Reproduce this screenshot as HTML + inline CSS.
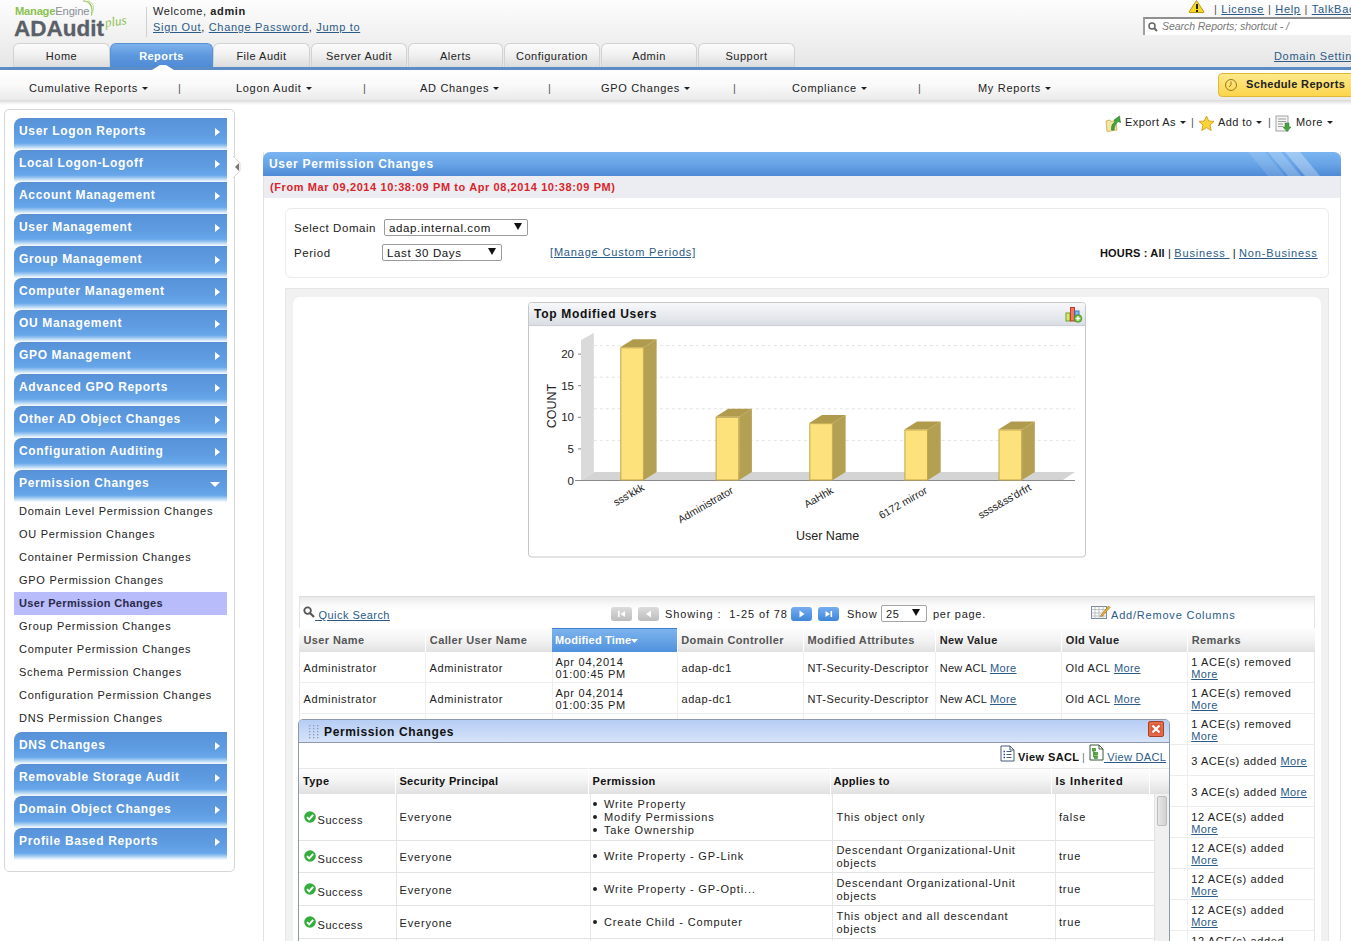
<!DOCTYPE html>
<html><head><meta charset="utf-8">
<style>
*{box-sizing:border-box;margin:0;padding:0}
html,body{width:1351px;height:941px;overflow:hidden;background:#fff;font-family:"Liberation Sans",sans-serif;font-size:11px;color:#222}
.a{position:absolute;white-space:nowrap}
.lnk{color:#2b5b86;text-decoration:underline}
#hdr{position:absolute;left:0;top:0;width:1351px;height:67px;background:linear-gradient(#fdfdfd 0%,#f3f3f3 45%,#e6e6e6 100%)}
.tab{position:absolute;top:43px;height:24px;border:1px solid #d2d2d2;border-bottom:none;border-radius:6px 6px 0 0;background:linear-gradient(#fbfbfb 0%,#f1f1f1 45%,#dcdcdc 100%);text-align:center;line-height:24px;color:#222;letter-spacing:.5px}
.tab.on{background:linear-gradient(#7eb2ec 0%,#5d98de 50%,#4f8ad6 100%);border-color:#5a90d4;color:#fff;font-weight:bold;letter-spacing:.45px}
#bl{position:absolute;left:0;top:67px;width:1351px;height:3px;background:#5b8cc6}
#sub{position:absolute;left:0;top:70px;width:1351px;height:31px;background:linear-gradient(#fff 0%,#f9f9f9 50%,#e9e9e9 100%)}
#subsh{position:absolute;left:0;top:100px;width:1351px;height:5px;background:linear-gradient(#d9d9d9,#fff)}
.sn{position:absolute;top:82px;letter-spacing:.68px;color:#222}
.car{display:inline-block;width:0;height:0;border-left:3px solid transparent;border-right:3px solid transparent;border-top:3px solid #222;vertical-align:middle;margin-left:4px;margin-top:-2px}
.sep{position:absolute;top:82px;color:#555}
#side{position:absolute;left:4px;top:109px;width:231px;height:763px;border:1px solid #d6d6d6;border-radius:5px;background:#fff}
.mb{position:absolute;left:14px;width:213px;height:32px;border-radius:8px 0 0 0;border-top:1px solid #5a8ed0;background:linear-gradient(#5893da 0%,#5e9be0 45%,#67a7ea 78%,#9ac6f0 86%,#e9f3fc 97%,#f4f9fe 100%);color:#fff;font-weight:bold;font-size:12px;letter-spacing:.65px;padding-left:5px;line-height:25px}
.mb i{position:absolute;right:7px;top:9px;width:0;height:0;border-top:4.5px solid transparent;border-bottom:4.5px solid transparent;border-left:5px solid #fff}
.mb i.dn{border-left:5px solid transparent;border-right:5px solid transparent;border-top:5px solid #fff;border-bottom:none;right:7px;top:11px}
.si{position:absolute;left:14px;width:213px;height:23px;padding-left:5px;line-height:23px;color:#222;letter-spacing:.72px}
.si.on{background:#b8bcfb;font-weight:bold;color:#2a2a48;letter-spacing:.33px}
</style></head><body>
<div id="hdr"></div>
<!-- logo -->
<div class="a" style="left:15px;top:5px;font-size:11.2px;font-weight:bold;color:#8cc152;letter-spacing:-.25px">Manage<span style="font-weight:normal;color:#8a8f94;letter-spacing:-.1px">Engine</span></div>
<svg class="a" style="left:80px;top:0px" width="20" height="18" viewBox="0 0 20 18"><path d="M3 0.8 Q14 1.5 11.5 15.5" stroke="#9ccc65" stroke-width="1.3" fill="none"/><path d="M8 0.5 Q16 4 12.5 13" stroke="#c0dd98" stroke-width="1" fill="none"/></svg>
<div class="a" style="left:14px;top:16px;font-size:22.5px;font-weight:bold;color:#5a6068;letter-spacing:0px;-webkit-text-stroke:.3px #5a6068">ADAudit</div>
<div class="a" style="left:106px;top:15px;font-size:13px;font-style:italic;color:#8cc152;font-family:'Liberation Serif',serif;transform:rotate(-8deg);transform-origin:left bottom">plus</div>
<div class="a" style="left:146px;top:7px;width:1px;height:30px;background:#d0d0d0"></div>
<div class="a" style="left:153px;top:5px;letter-spacing:.62px;color:#222">Welcome, <b>admin</b></div>
<div class="a" style="left:153px;top:21px;letter-spacing:.68px;color:#222"><span class="lnk">Sign Out</span>, <span class="lnk">Change Password</span>, <span class="lnk">Jump to</span></div>

<!-- top right -->
<svg class="a" style="left:1188px;top:0px" width="17" height="13" viewBox="0 0 17 13"><path d="M8.5 0.5 L16 12 Q16 12.5 15.5 12.5 L1.5 12.5 Q1 12.5 1 12 Z" fill="#f7d62a" stroke="#b89a10" stroke-width="1" stroke-linejoin="round"/><rect x="8" y="4" width="2" height="5" fill="#222"/><rect x="8" y="10" width="2" height="2" fill="#222"/></svg>
<div class="a" style="left:1214px;top:3px;letter-spacing:.7px;color:#555">|&nbsp;<span class="lnk">License</span>&nbsp;|&nbsp;<span class="lnk">Help</span>&nbsp;|&nbsp;<span class="lnk">TalkBack</span></div>
<div class="a" style="left:1143px;top:17px;width:220px;height:18px;border-top:2px solid #8f8f8f;border-left:2px solid #a0a0a0;background:#fff"></div>
<svg class="a" style="left:1148px;top:22px" width="10" height="10" viewBox="0 0 10 10"><circle cx="4" cy="4" r="3" stroke="#666" stroke-width="1.5" fill="none"/><path d="M6 6 L9 9" stroke="#666" stroke-width="2"/></svg>
<div class="a" style="left:1162px;top:20px;font-style:italic;color:#777;font-size:10.5px;letter-spacing:-.05px">Search Reports; shortcut - /</div>
<div class="a lnk" style="left:1274px;top:50px;letter-spacing:.68px">Domain Settings</div>

<!-- tabs -->
<div class="tab" style="left:13px;width:97px">Home</div>
<div class="tab on" style="left:110px;width:103px">Reports</div>
<div class="tab" style="left:213px;width:97px">File Audit</div>
<div class="tab" style="left:311px;width:96px">Server Audit</div>
<div class="tab" style="left:408px;width:95px">Alerts</div>
<div class="tab" style="left:504px;width:96px">Configuration</div>
<div class="tab" style="left:601px;width:96px">Admin</div>
<div class="tab" style="left:698px;width:97px">Support</div>
<div id="bl"></div>
<svg class="a" style="left:152px;top:64px" width="22" height="6" viewBox="0 0 22 6"><path d="M0 6 L8 1 L14 1 L22 6 Z" fill="#fff"/></svg>

<!-- subnav -->
<div id="sub"></div>
<div id="subsh"></div>
<div class="sn" style="left:29px">Cumulative Reports<span class="car"></span></div>
<div class="sep" style="left:178px">|</div>
<div class="sn" style="left:236px">Logon Audit<span class="car"></span></div>
<div class="sep" style="left:363px">|</div>
<div class="sn" style="left:420px">AD Changes<span class="car"></span></div>
<div class="sep" style="left:548px">|</div>
<div class="sn" style="left:601px">GPO Changes<span class="car"></span></div>
<div class="sep" style="left:733px">|</div>
<div class="sn" style="left:792px">Compliance<span class="car"></span></div>
<div class="sep" style="left:918px">|</div>
<div class="sn" style="left:978px">My Reports<span class="car"></span></div>
<div class="a" style="left:1218px;top:73px;width:140px;height:24px;border:1px solid #e0b93a;border-radius:4px;background:linear-gradient(#ffe98a,#fcd54c)"></div>
<svg class="a" style="left:1224px;top:78px" width="14" height="14" viewBox="0 0 14 14"><circle cx="7" cy="7" r="5.5" stroke="#9a7a20" stroke-width="1" fill="none"/><path d="M7 3.5 V7 L5 9" stroke="#9a7a20" stroke-width="1" fill="none"/></svg>
<div class="a" style="left:1246px;top:78px;font-weight:bold;letter-spacing:.35px;color:#222">Schedule Reports</div>

<!-- sidebar -->
<div id="side"></div>
<div class="mb" style="top:118px">User Logon Reports<i></i></div>
<div class="mb" style="top:150px">Local Logon-Logoff<i></i></div>
<div class="mb" style="top:182px">Account Management<i></i></div>
<div class="mb" style="top:214px">User Management<i></i></div>
<div class="mb" style="top:246px">Group Management<i></i></div>
<div class="mb" style="top:278px">Computer Management<i></i></div>
<div class="mb" style="top:310px">OU Management<i></i></div>
<div class="mb" style="top:342px">GPO Management<i></i></div>
<div class="mb" style="top:374px">Advanced GPO Reports<i></i></div>
<div class="mb" style="top:406px">Other AD Object Changes<i></i></div>
<div class="mb" style="top:438px">Configuration Auditing<i></i></div>
<div class="mb" style="top:470px">Permission Changes<i class="dn"></i></div>
<div class="si" style="top:500px">Domain Level Permission Changes</div>
<div class="si" style="top:523px">OU Permission Changes</div>
<div class="si" style="top:546px">Container Permission Changes</div>
<div class="si" style="top:569px">GPO Permission Changes</div>
<div class="si on" style="top:592px">User Permission Changes</div>
<div class="si" style="top:615px">Group Permission Changes</div>
<div class="si" style="top:638px">Computer Permission Changes</div>
<div class="si" style="top:661px">Schema Permission Changes</div>
<div class="si" style="top:684px">Configuration Permission Changes</div>
<div class="si" style="top:707px">DNS Permission Changes</div>
<div class="mb" style="top:732px">DNS Changes<i></i></div>
<div class="mb" style="top:764px">Removable Storage Audit<i></i></div>
<div class="mb" style="top:796px">Domain Object Changes<i></i></div>
<div class="mb" style="top:828px">Profile Based Reports<i></i></div>
<svg class="a" style="left:233px;top:156px" width="8" height="22" viewBox="0 0 8 22"><path d="M0 0 L7 7 L7 15 L0 22" fill="#fff" stroke="#d6d6d6"/><path d="M2 11 L6 7 L6 15 Z" fill="#777"/></svg>


<!-- toolbar export -->
<svg class="a" style="left:1105px;top:115px" width="17" height="17" viewBox="0 0 17 17"><path d="M1 6 L5 5 L6 6.5 L11 5.5 L12 15 L2 16.5 Z" fill="#f4e6a0" stroke="#c8aa50" stroke-width="0.8"/><path d="M6.5 15 Q6 9 10 7 L9 5 L14.5 1 L15.5 7.5 L13 6.5 Q9.5 9 9 15 Z" fill="#3da63a" stroke="#2a7a25" stroke-width="0.6"/></svg>
<div class="a" style="left:1125px;top:116px;letter-spacing:.43px">Export As<span class="car"></span></div>
<div class="a" style="left:1191px;top:116px;color:#555">|</div>
<svg class="a" style="left:1198px;top:115px" width="17" height="17" viewBox="0 0 17 17"><path d="M8.5 1 L10.7 6 L16 6.4 L12 10 L13.2 15.5 L8.5 12.6 L3.8 15.5 L5 10 L1 6.4 L6.3 6 Z" fill="#fbd537" stroke="#d39a17" stroke-width="0.9"/></svg>
<div class="a" style="left:1218px;top:116px;letter-spacing:.43px">Add to<span class="car"></span></div>
<div class="a" style="left:1268px;top:116px;color:#555">|</div>
<svg class="a" style="left:1275px;top:115px" width="17" height="17" viewBox="0 0 17 17"><rect x="1" y="1" width="12" height="15" fill="#f4f4f4" stroke="#9a9a9a" stroke-width="0.9"/><path d="M3 4 H11 M3 6.5 H11 M3 9 H8 M3 11.5 H8" stroke="#888" stroke-width="0.8"/><path d="M10 8 H14 V12 H16 L12 16.5 L8 12 H10 Z" fill="#47a23f" stroke="#2e7d2a" stroke-width="0.5"/></svg>
<div class="a" style="left:1296px;top:116px;letter-spacing:.43px">More<span class="car"></span></div>

<!-- report panel -->
<div class="a" style="left:263px;top:152px;width:1078px;height:800px;border-left:1px solid #e2e2e2;border-right:1px solid #e2e2e2;background:#fff"></div>
<div class="a" style="left:263px;top:152px;width:1078px;height:24px;border-radius:7px 7px 0 0;background:linear-gradient(#7ab4f0 0%,#6aa6e8 45%,#4f8bd6 100%);overflow:hidden">
 <svg style="position:absolute;left:985px;top:0" width="93" height="24" viewBox="0 0 93 24"><path d="M0 0 H17 L37 24 H20 Z" fill="#fff" fill-opacity=".13"/><path d="M20 0 H33 L53 24 H40 Z" fill="#fff" fill-opacity=".22"/><path d="M37 0 H52 L72 24 H57 Z" fill="#fff" fill-opacity=".3"/></svg>
</div>
<div class="a" style="left:269px;top:157px;font-size:12px;font-weight:bold;color:#fff;letter-spacing:.7px">User Permission Changes</div>
<div class="a" style="left:264px;top:176px;width:1076px;height:22px;background:#ecedf2"></div>
<div class="a" style="left:270px;top:181px;font-weight:bold;color:#d9252a;letter-spacing:.6px">(From Mar 09,2014 10:38:09 PM to Apr 08,2014 10:38:09 PM)</div>

<!-- filter box -->
<div class="a" style="left:285px;top:208px;width:1044px;height:70px;border:1px solid #ebebeb;border-radius:6px;background:#fff"></div>
<div class="a" style="left:294px;top:222px;font-size:11.5px;color:#222;letter-spacing:.56px">Select Domain</div>
<div class="a" style="left:384px;top:219px;width:144px;height:17px;border:1px solid #9a9a9a;border-radius:2px;background:#fff"></div>
<div class="a" style="left:389px;top:222px;font-size:11.5px;color:#111;letter-spacing:.62px">adap.internal.com</div>
<svg class="a" style="left:514px;top:223px" width="8" height="7"><path d="M0 0 H8 L4 7 Z" fill="#111"/></svg>
<div class="a" style="left:294px;top:247px;font-size:11.5px;color:#222;letter-spacing:.56px">Period</div>
<div class="a" style="left:382px;top:244px;width:120px;height:17px;border:1px solid #9a9a9a;border-radius:2px;background:#fff"></div>
<div class="a" style="left:387px;top:247px;font-size:11.5px;color:#111;letter-spacing:.62px">Last 30 Days</div>
<svg class="a" style="left:488px;top:248px" width="8" height="7"><path d="M0 0 H8 L4 7 Z" fill="#111"/></svg>
<div class="a lnk" style="left:550px;top:246px;letter-spacing:.82px">[Manage Custom Periods]</div>
<div class="a" style="left:1100px;top:247px;font-weight:bold;color:#111;letter-spacing:.15px">HOURS : All <span style="font-weight:normal">|</span> <span class="lnk" style="font-weight:normal;letter-spacing:.85px">Business </span><span style="font-weight:normal">&nbsp;|&nbsp;</span><span class="lnk" style="font-weight:normal;letter-spacing:.85px">Non-Business </span></div>

<!-- chart outer -->
<div class="a" style="left:285px;top:288px;width:1044px;height:700px;background:#f1f1f1;border:1px solid #e6e6e6"></div>
<div class="a" style="left:293px;top:297px;width:1028px;height:700px;background:#fff;border-radius:7px 7px 0 0"></div>

<!-- CHART -->
<svg class="a" style="left:528px;top:302px" width="559" height="256" viewBox="0 0 559 256" font-family="Liberation Sans, sans-serif">
<defs><linearGradient id="chh" x1="0" y1="0" x2="0" y2="1"><stop offset="0" stop-color="#f7f8fa"/><stop offset="1" stop-color="#d9dde3"/></linearGradient></defs>
<rect x="0.5" y="0.5" width="557" height="254.5" rx="3" fill="#fff" stroke="#c6c6c6"/>
<path d="M1 4 Q1 1 4 1 H554 Q557 1 557 4 V24 H1 Z" fill="url(#chh)"/>
<line x1="1" y1="23.6" x2="557" y2="23.6" stroke="#c9cdd3"/>
<path d="M53.0 178.0 L53.0 38 L65.8 31 L65.8 170.0 Z" fill="#dadada"/>
<path d="M53.0 178.0 L65.8 170.0 L547 170.0 L535 178.0 Z" fill="#d4d4d4"/>
<line x1="65.8" y1="138.4" x2="547" y2="138.4" stroke="#e3e3e3" stroke-dasharray="3,3"/>
<line x1="65.8" y1="106.8" x2="547" y2="106.8" stroke="#e3e3e3" stroke-dasharray="3,3"/>
<line x1="65.8" y1="75.2" x2="547" y2="75.2" stroke="#e3e3e3" stroke-dasharray="3,3"/>
<line x1="65.8" y1="43.6" x2="547" y2="43.6" stroke="#e3e3e3" stroke-dasharray="3,3"/>
<line x1="47" y1="178.5" x2="547" y2="178.5" stroke="#8a8a8a"/>
<line x1="50" y1="178.5" x2="53" y2="178.5" stroke="#888"/>
<text x="46" y="182.5" font-size="11.5" text-anchor="end" fill="#222">0</text>
<line x1="50" y1="146.9" x2="53" y2="146.9" stroke="#888"/>
<text x="46" y="150.9" font-size="11.5" text-anchor="end" fill="#222">5</text>
<line x1="50" y1="115.3" x2="53" y2="115.3" stroke="#888"/>
<text x="46" y="119.3" font-size="11.5" text-anchor="end" fill="#222">10</text>
<line x1="50" y1="83.7" x2="53" y2="83.7" stroke="#888"/>
<text x="46" y="87.7" font-size="11.5" text-anchor="end" fill="#222">15</text>
<line x1="50" y1="52.1" x2="53" y2="52.1" stroke="#888"/>
<text x="46" y="56.1" font-size="11.5" text-anchor="end" fill="#222">20</text>
<path d="M115.9 178.0 L128.6 170.0 L128.6 37.28 L115.9 45.28 Z" fill="#b3a052"/>
<path d="M92.3 45.28 L105.0 37.28 L128.6 37.28 L115.9 45.28 Z" fill="#b09a4c"/>
<rect x="92.8" y="45.78" width="22.6" height="132.22000000000003" fill="#fde17a" stroke="#c4a748" stroke-width="1"/>
<path d="M211.2 178.0 L223.9 170.0 L223.9 106.8 L211.2 114.8 Z" fill="#b3a052"/>
<path d="M187.6 114.8 L200.3 106.8 L223.9 106.8 L211.2 114.8 Z" fill="#b09a4c"/>
<rect x="188.1" y="115.3" width="22.6" height="62.69999999999999" fill="#fde17a" stroke="#c4a748" stroke-width="1"/>
<path d="M304.9 178.0 L317.6 170.0 L317.6 113.12 L304.9 121.12 Z" fill="#b3a052"/>
<path d="M281.3 121.12 L294.0 113.12 L317.6 113.12 L304.9 121.12 Z" fill="#b09a4c"/>
<rect x="281.8" y="121.62" width="22.6" height="56.379999999999995" fill="#fde17a" stroke="#c4a748" stroke-width="1"/>
<path d="M400.0 178.0 L412.7 170.0 L412.7 119.44 L400.0 127.44 Z" fill="#b3a052"/>
<path d="M376.4 127.44 L389.1 119.44 L412.7 119.44 L400.0 127.44 Z" fill="#b09a4c"/>
<rect x="376.9" y="127.94" width="22.6" height="50.06" fill="#fde17a" stroke="#c4a748" stroke-width="1"/>
<path d="M494.1 178.0 L506.8 170.0 L506.8 119.44 L494.1 127.44 Z" fill="#b3a052"/>
<path d="M470.5 127.44 L483.2 119.44 L506.8 119.44 L494.1 127.44 Z" fill="#b09a4c"/>
<rect x="471.0" y="127.94" width="22.6" height="50.06" fill="#fde17a" stroke="#c4a748" stroke-width="1"/>
<text x="117.0" y="187.5" font-size="10.5" text-anchor="end" fill="#222" transform="rotate(-30 117.0 187.5)">sss'kkk</text>
<text x="206.0" y="190.5" font-size="10.5" text-anchor="end" fill="#222" transform="rotate(-30 206.0 190.5)">Administrator</text>
<text x="306.0" y="190.5" font-size="10.5" text-anchor="end" fill="#222" transform="rotate(-30 306.0 190.5)">AaHhk</text>
<text x="400.0" y="190.5" font-size="10.5" text-anchor="end" fill="#222" transform="rotate(-30 400.0 190.5)">6172 mirror</text>
<text x="504.0" y="187.5" font-size="10.5" text-anchor="end" fill="#222" transform="rotate(-30 504.0 187.5)">ssss&amp;ss'drfrt</text>
<text x="27.5" y="104" font-size="12.5" text-anchor="middle" fill="#222" transform="rotate(-90 27.5 104)">COUNT</text>
<text x="268" y="238" font-size="12.5" fill="#222">User Name</text>
<text x="6" y="16" font-size="12" font-weight="bold" fill="#111" letter-spacing="0.7">Top Modified Users</text>
<g transform="translate(537,4)"><rect x="1" y="7" width="4" height="8" fill="#d8e86a" stroke="#6fa030" stroke-width="1"/><rect x="5.5" y="1.5" width="4" height="13.5" fill="#f07a60" stroke="#c0392b" stroke-width="1"/><rect x="10" y="5" width="4" height="10" fill="#7ec0ee" stroke="#3a80c0" stroke-width="1"/><circle cx="13" cy="12.5" r="3.8" fill="#7cc242" stroke="#3d8a20" stroke-width=".8"/><path d="M10.8 12.5 H15.2 M13 10.3 V14.7" stroke="#fff" stroke-width="1.4"/></g>
</svg>
<!-- TABLE -->
<div class="a" style="left:299px;top:596px;width:1016px;height:32px;border-top:1px solid #dcdcdc;border-left:1px solid #e4e4e4;border-right:1px solid #e4e4e4;background:linear-gradient(#e9e9e9 0px,#fafafa 8px,#fff 14px)"></div>
<svg class="a" style="left:303px;top:606px" width="12" height="12" viewBox="0 0 12 12"><circle cx="4.6" cy="4.6" r="3.3" stroke="#555" stroke-width="1.8" fill="none"/><path d="M7 7 L11 11" stroke="#555" stroke-width="2.2"/></svg>
<div class="a lnk" style="left:315px;top:609px;letter-spacing:.45px">&nbsp;Quick Search</div>
<div class="a" style="left:611px;top:607px;width:21px;height:14px;border-radius:3px;background:linear-gradient(#dcdcdc,#bdbdbd)"></div><svg class="a" style="left:611px;top:607px" width="21" height="14"><rect x="7" y="4" width="1.6" height="6" fill="#fff"/><path d="M14 4 L9.5 7 L14 10 Z" fill="#fff"/></svg>
<div class="a" style="left:638px;top:607px;width:21px;height:14px;border-radius:3px;background:linear-gradient(#dcdcdc,#bdbdbd)"></div><svg class="a" style="left:638px;top:607px" width="21" height="14"><path d="M13 3.5 L8 7 L13 10.5 Z" fill="#fff"/></svg>
<div class="a" style="left:665px;top:608px;letter-spacing:.9px">Showing :&nbsp; 1-25 of 78</div>
<div class="a" style="left:791px;top:607px;width:21px;height:14px;border-radius:3px;background:linear-gradient(#76aef0,#3f86d8)"></div><svg class="a" style="left:791px;top:607px" width="21" height="14"><path d="M8.5 3.5 L13.5 7 L8.5 10.5 Z" fill="#fff"/></svg>
<div class="a" style="left:818px;top:607px;width:21px;height:14px;border-radius:3px;background:linear-gradient(#76aef0,#3f86d8)"></div><svg class="a" style="left:818px;top:607px" width="21" height="14"><path d="M7.5 4 L12 7 L7.5 10 Z" fill="#fff"/><rect x="12.5" y="4" width="1.6" height="6" fill="#fff"/></svg>
<div class="a" style="left:847px;top:608px;letter-spacing:.7px">Show</div>
<div class="a" style="left:881px;top:605px;width:46px;height:17px;border:1px solid #a5a5a5;border-radius:2px;background:#fff"></div>
<div class="a" style="left:886px;top:608px;letter-spacing:.7px">25</div>
<svg class="a" style="left:912px;top:609px" width="8" height="7"><path d="M0 0 H8 L4 7 Z" fill="#111"/></svg>
<div class="a" style="left:933px;top:608px;letter-spacing:.72px">per page.</div>
<svg class="a" style="left:1091px;top:604px" width="20" height="15" viewBox="0 0 20 15"><rect x="0.5" y="2.5" width="15" height="12" fill="#fff" stroke="#7a8a9a"/><path d="M0.5 5.5 H15.5 M4 2.5 V14.5 M8 2.5 V14.5 M12 2.5 V14.5 M0.5 9 H15.5 M0.5 12 H15.5" stroke="#a9b4c0" stroke-width=".8"/><path d="M10 11 L17.5 2 L19 3.5 L11.5 12 L9.5 12.8 Z" fill="#f0b030" stroke="#9a6a10" stroke-width=".6"/></svg>
<div class="a" style="left:1111px;top:609px;color:#2b5b86;letter-spacing:.8px">Add/Remove Columns</div>
<div class="a" style="left:299px;top:628px;width:1016px;height:24px;background:linear-gradient(#fdfdfd 0%,#f3f3f3 50%,#e1e1e1 100%)"></div>
<div class="a" style="left:303.4px;top:634px;font-weight:bold;color:#555;letter-spacing:.4px">User Name</div>
<div class="a" style="left:425px;top:628px;width:1px;height:24px;background:#fff"></div>
<div class="a" style="left:429.8px;top:634px;font-weight:bold;color:#555;letter-spacing:.4px">Caller User Name</div>
<div class="a" style="left:552px;top:628px;width:1px;height:24px;background:#fff"></div>
<div class="a" style="left:552px;top:628px;width:125px;height:24px;border-top:1px solid #3d7fd0;background:linear-gradient(#7db3ee,#5092dd)"></div>
<div class="a" style="left:555px;top:634px;font-weight:bold;color:#fff;letter-spacing:.2px">Modified Time<svg width="7" height="5" style="vertical-align:middle;margin-left:0px"><path d="M0 0 H7 L3.5 4 Z" fill="#fff"/></svg></div>
<div class="a" style="left:677px;top:628px;width:1px;height:24px;background:#fff"></div>
<div class="a" style="left:681.2px;top:634px;font-weight:bold;color:#555;letter-spacing:.4px">Domain Controller</div>
<div class="a" style="left:803px;top:628px;width:1px;height:24px;background:#fff"></div>
<div class="a" style="left:807.4px;top:634px;font-weight:bold;color:#555;letter-spacing:.4px">Modified Attributes</div>
<div class="a" style="left:935px;top:628px;width:1px;height:24px;background:#fff"></div>
<div class="a" style="left:939.7px;top:634px;font-weight:bold;color:#222;letter-spacing:.4px">New Value</div>
<div class="a" style="left:1061px;top:628px;width:1px;height:24px;background:#fff"></div>
<div class="a" style="left:1065.7px;top:634px;font-weight:bold;color:#222;letter-spacing:.4px">Old Value</div>
<div class="a" style="left:1187px;top:628px;width:1px;height:24px;background:#fff"></div>
<div class="a" style="left:1191.7px;top:634px;font-weight:bold;color:#555;letter-spacing:.4px">Remarks</div>
<div class="a" style="left:299px;top:652px;width:1016px;height:31px;border-bottom:1px solid #ededed;border-left:1px solid #e6e6e6;border-right:1px solid #e6e6e6"></div>
<div class="a" style="left:425px;top:652px;width:1px;height:31px;background:#efefef"></div>
<div class="a" style="left:552px;top:652px;width:1px;height:31px;background:#efefef"></div>
<div class="a" style="left:677px;top:652px;width:1px;height:31px;background:#efefef"></div>
<div class="a" style="left:803px;top:652px;width:1px;height:31px;background:#efefef"></div>
<div class="a" style="left:935px;top:652px;width:1px;height:31px;background:#efefef"></div>
<div class="a" style="left:1061px;top:652px;width:1px;height:31px;background:#efefef"></div>
<div class="a" style="left:1187px;top:652px;width:1px;height:31px;background:#efefef"></div>
<div class="a" style="left:303.4px;top:662px;letter-spacing:.68px">Administrator</div>
<div class="a" style="left:429.4px;top:662px;letter-spacing:.68px">Administrator</div>
<div class="a" style="left:555.4px;top:656px;letter-spacing:.75px;line-height:12px">Apr 04,2014<br>01:00:45 PM</div>
<div class="a" style="left:681.5px;top:662px;letter-spacing:.56px">adap-dc1</div>
<div class="a" style="left:807.4px;top:662px;letter-spacing:.46px">NT-Security-Descriptor</div>
<div class="a" style="left:939.8px;top:662px;letter-spacing:.2px">New ACL <span class="lnk" style="letter-spacing:.4px">More</span></div>
<div class="a" style="left:1065.5px;top:662px;letter-spacing:.6px">Old ACL <span class="lnk" style="letter-spacing:.4px">More</span></div>
<div class="a" style="left:1191.2px;top:656px;letter-spacing:.66px;line-height:12px">1 ACE(s) removed<br><span class="lnk" style="letter-spacing:.4px">More</span></div>
<div class="a" style="left:299px;top:683px;width:1016px;height:31px;border-bottom:1px solid #ededed;border-left:1px solid #e6e6e6;border-right:1px solid #e6e6e6"></div>
<div class="a" style="left:425px;top:683px;width:1px;height:31px;background:#efefef"></div>
<div class="a" style="left:552px;top:683px;width:1px;height:31px;background:#efefef"></div>
<div class="a" style="left:677px;top:683px;width:1px;height:31px;background:#efefef"></div>
<div class="a" style="left:803px;top:683px;width:1px;height:31px;background:#efefef"></div>
<div class="a" style="left:935px;top:683px;width:1px;height:31px;background:#efefef"></div>
<div class="a" style="left:1061px;top:683px;width:1px;height:31px;background:#efefef"></div>
<div class="a" style="left:1187px;top:683px;width:1px;height:31px;background:#efefef"></div>
<div class="a" style="left:303.4px;top:693px;letter-spacing:.68px">Administrator</div>
<div class="a" style="left:429.4px;top:693px;letter-spacing:.68px">Administrator</div>
<div class="a" style="left:555.4px;top:687px;letter-spacing:.75px;line-height:12px">Apr 04,2014<br>01:00:35 PM</div>
<div class="a" style="left:681.5px;top:693px;letter-spacing:.56px">adap-dc1</div>
<div class="a" style="left:807.4px;top:693px;letter-spacing:.46px">NT-Security-Descriptor</div>
<div class="a" style="left:939.8px;top:693px;letter-spacing:.2px">New ACL <span class="lnk" style="letter-spacing:.4px">More</span></div>
<div class="a" style="left:1065.5px;top:693px;letter-spacing:.6px">Old ACL <span class="lnk" style="letter-spacing:.4px">More</span></div>
<div class="a" style="left:1191.2px;top:687px;letter-spacing:.66px;line-height:12px">1 ACE(s) removed<br><span class="lnk" style="letter-spacing:.4px">More</span></div>
<div class="a" style="left:299px;top:714px;width:1016px;height:31px;border-bottom:1px solid #ededed;border-left:1px solid #e6e6e6;border-right:1px solid #e6e6e6"></div>
<div class="a" style="left:425px;top:714px;width:1px;height:31px;background:#efefef"></div>
<div class="a" style="left:552px;top:714px;width:1px;height:31px;background:#efefef"></div>
<div class="a" style="left:677px;top:714px;width:1px;height:31px;background:#efefef"></div>
<div class="a" style="left:803px;top:714px;width:1px;height:31px;background:#efefef"></div>
<div class="a" style="left:935px;top:714px;width:1px;height:31px;background:#efefef"></div>
<div class="a" style="left:1061px;top:714px;width:1px;height:31px;background:#efefef"></div>
<div class="a" style="left:1187px;top:714px;width:1px;height:31px;background:#efefef"></div>
<div class="a" style="left:303.4px;top:724px;letter-spacing:.68px">Administrator</div>
<div class="a" style="left:429.4px;top:724px;letter-spacing:.68px">Administrator</div>
<div class="a" style="left:555.4px;top:718px;letter-spacing:.75px;line-height:12px">Apr 04,2014<br>01:00:25 PM</div>
<div class="a" style="left:681.5px;top:724px;letter-spacing:.56px">adap-dc1</div>
<div class="a" style="left:807.4px;top:724px;letter-spacing:.46px">NT-Security-Descriptor</div>
<div class="a" style="left:939.8px;top:724px;letter-spacing:.2px">New ACL <span class="lnk" style="letter-spacing:.4px">More</span></div>
<div class="a" style="left:1065.5px;top:724px;letter-spacing:.6px">Old ACL <span class="lnk" style="letter-spacing:.4px">More</span></div>
<div class="a" style="left:1191.2px;top:718px;letter-spacing:.66px;line-height:12px">1 ACE(s) removed<br><span class="lnk" style="letter-spacing:.4px">More</span></div>
<div class="a" style="left:299px;top:745px;width:1016px;height:31px;border-bottom:1px solid #ededed;border-left:1px solid #e6e6e6;border-right:1px solid #e6e6e6"></div>
<div class="a" style="left:425px;top:745px;width:1px;height:31px;background:#efefef"></div>
<div class="a" style="left:552px;top:745px;width:1px;height:31px;background:#efefef"></div>
<div class="a" style="left:677px;top:745px;width:1px;height:31px;background:#efefef"></div>
<div class="a" style="left:803px;top:745px;width:1px;height:31px;background:#efefef"></div>
<div class="a" style="left:935px;top:745px;width:1px;height:31px;background:#efefef"></div>
<div class="a" style="left:1061px;top:745px;width:1px;height:31px;background:#efefef"></div>
<div class="a" style="left:1187px;top:745px;width:1px;height:31px;background:#efefef"></div>
<div class="a" style="left:1191.2px;top:755px;letter-spacing:.57px">3 ACE(s) added <span class="lnk" style="letter-spacing:.4px">More</span></div>
<div class="a" style="left:299px;top:776px;width:1016px;height:31px;border-bottom:1px solid #ededed;border-left:1px solid #e6e6e6;border-right:1px solid #e6e6e6"></div>
<div class="a" style="left:425px;top:776px;width:1px;height:31px;background:#efefef"></div>
<div class="a" style="left:552px;top:776px;width:1px;height:31px;background:#efefef"></div>
<div class="a" style="left:677px;top:776px;width:1px;height:31px;background:#efefef"></div>
<div class="a" style="left:803px;top:776px;width:1px;height:31px;background:#efefef"></div>
<div class="a" style="left:935px;top:776px;width:1px;height:31px;background:#efefef"></div>
<div class="a" style="left:1061px;top:776px;width:1px;height:31px;background:#efefef"></div>
<div class="a" style="left:1187px;top:776px;width:1px;height:31px;background:#efefef"></div>
<div class="a" style="left:1191.2px;top:786px;letter-spacing:.57px">3 ACE(s) added <span class="lnk" style="letter-spacing:.4px">More</span></div>
<div class="a" style="left:299px;top:807px;width:1016px;height:31px;border-bottom:1px solid #ededed;border-left:1px solid #e6e6e6;border-right:1px solid #e6e6e6"></div>
<div class="a" style="left:425px;top:807px;width:1px;height:31px;background:#efefef"></div>
<div class="a" style="left:552px;top:807px;width:1px;height:31px;background:#efefef"></div>
<div class="a" style="left:677px;top:807px;width:1px;height:31px;background:#efefef"></div>
<div class="a" style="left:803px;top:807px;width:1px;height:31px;background:#efefef"></div>
<div class="a" style="left:935px;top:807px;width:1px;height:31px;background:#efefef"></div>
<div class="a" style="left:1061px;top:807px;width:1px;height:31px;background:#efefef"></div>
<div class="a" style="left:1187px;top:807px;width:1px;height:31px;background:#efefef"></div>
<div class="a" style="left:1191.2px;top:811px;letter-spacing:.61px;line-height:12px">12 ACE(s) added<br><span class="lnk" style="letter-spacing:.4px">More</span></div>
<div class="a" style="left:299px;top:838px;width:1016px;height:31px;border-bottom:1px solid #ededed;border-left:1px solid #e6e6e6;border-right:1px solid #e6e6e6"></div>
<div class="a" style="left:425px;top:838px;width:1px;height:31px;background:#efefef"></div>
<div class="a" style="left:552px;top:838px;width:1px;height:31px;background:#efefef"></div>
<div class="a" style="left:677px;top:838px;width:1px;height:31px;background:#efefef"></div>
<div class="a" style="left:803px;top:838px;width:1px;height:31px;background:#efefef"></div>
<div class="a" style="left:935px;top:838px;width:1px;height:31px;background:#efefef"></div>
<div class="a" style="left:1061px;top:838px;width:1px;height:31px;background:#efefef"></div>
<div class="a" style="left:1187px;top:838px;width:1px;height:31px;background:#efefef"></div>
<div class="a" style="left:1191.2px;top:842px;letter-spacing:.61px;line-height:12px">12 ACE(s) added<br><span class="lnk" style="letter-spacing:.4px">More</span></div>
<div class="a" style="left:299px;top:869px;width:1016px;height:31px;border-bottom:1px solid #ededed;border-left:1px solid #e6e6e6;border-right:1px solid #e6e6e6"></div>
<div class="a" style="left:425px;top:869px;width:1px;height:31px;background:#efefef"></div>
<div class="a" style="left:552px;top:869px;width:1px;height:31px;background:#efefef"></div>
<div class="a" style="left:677px;top:869px;width:1px;height:31px;background:#efefef"></div>
<div class="a" style="left:803px;top:869px;width:1px;height:31px;background:#efefef"></div>
<div class="a" style="left:935px;top:869px;width:1px;height:31px;background:#efefef"></div>
<div class="a" style="left:1061px;top:869px;width:1px;height:31px;background:#efefef"></div>
<div class="a" style="left:1187px;top:869px;width:1px;height:31px;background:#efefef"></div>
<div class="a" style="left:1191.2px;top:873px;letter-spacing:.61px;line-height:12px">12 ACE(s) added<br><span class="lnk" style="letter-spacing:.4px">More</span></div>
<div class="a" style="left:299px;top:900px;width:1016px;height:31px;border-bottom:1px solid #ededed;border-left:1px solid #e6e6e6;border-right:1px solid #e6e6e6"></div>
<div class="a" style="left:425px;top:900px;width:1px;height:31px;background:#efefef"></div>
<div class="a" style="left:552px;top:900px;width:1px;height:31px;background:#efefef"></div>
<div class="a" style="left:677px;top:900px;width:1px;height:31px;background:#efefef"></div>
<div class="a" style="left:803px;top:900px;width:1px;height:31px;background:#efefef"></div>
<div class="a" style="left:935px;top:900px;width:1px;height:31px;background:#efefef"></div>
<div class="a" style="left:1061px;top:900px;width:1px;height:31px;background:#efefef"></div>
<div class="a" style="left:1187px;top:900px;width:1px;height:31px;background:#efefef"></div>
<div class="a" style="left:1191.2px;top:904px;letter-spacing:.61px;line-height:12px">12 ACE(s) added<br><span class="lnk" style="letter-spacing:.4px">More</span></div>
<div class="a" style="left:299px;top:931px;width:1016px;height:31px;border-bottom:1px solid #ededed;border-left:1px solid #e6e6e6;border-right:1px solid #e6e6e6"></div>
<div class="a" style="left:425px;top:931px;width:1px;height:31px;background:#efefef"></div>
<div class="a" style="left:552px;top:931px;width:1px;height:31px;background:#efefef"></div>
<div class="a" style="left:677px;top:931px;width:1px;height:31px;background:#efefef"></div>
<div class="a" style="left:803px;top:931px;width:1px;height:31px;background:#efefef"></div>
<div class="a" style="left:935px;top:931px;width:1px;height:31px;background:#efefef"></div>
<div class="a" style="left:1061px;top:931px;width:1px;height:31px;background:#efefef"></div>
<div class="a" style="left:1187px;top:931px;width:1px;height:31px;background:#efefef"></div>
<div class="a" style="left:1191.2px;top:935px;letter-spacing:.61px;line-height:12px">12 ACE(s) added<br><span class="lnk" style="letter-spacing:.4px">More</span></div>
<!-- DIALOG -->
<div class="a" style="left:298px;top:719px;width:872px;height:240px;border:1px solid #8c99aa;border-radius:5px 5px 0 0;background:#fff;overflow:hidden">
 <div style="position:absolute;left:0;top:0;width:100%;height:23px;background:linear-gradient(#b6cdf4,#d6e3f9);border-bottom:1px solid #8f9bab"></div>
</div>
<svg class="a" style="left:308px;top:724px" width="12" height="16"><rect x="1" y="1" width="1.3" height="1.3" fill="#8a9ab8"/><rect x="1" y="4" width="1.3" height="1.3" fill="#8a9ab8"/><rect x="1" y="7" width="1.3" height="1.3" fill="#8a9ab8"/><rect x="1" y="10" width="1.3" height="1.3" fill="#8a9ab8"/><rect x="1" y="13" width="1.3" height="1.3" fill="#8a9ab8"/><rect x="5" y="1" width="1.3" height="1.3" fill="#8a9ab8"/><rect x="5" y="4" width="1.3" height="1.3" fill="#8a9ab8"/><rect x="5" y="7" width="1.3" height="1.3" fill="#8a9ab8"/><rect x="5" y="10" width="1.3" height="1.3" fill="#8a9ab8"/><rect x="5" y="13" width="1.3" height="1.3" fill="#8a9ab8"/><rect x="9" y="1" width="1.3" height="1.3" fill="#8a9ab8"/><rect x="9" y="4" width="1.3" height="1.3" fill="#8a9ab8"/><rect x="9" y="7" width="1.3" height="1.3" fill="#8a9ab8"/><rect x="9" y="10" width="1.3" height="1.3" fill="#8a9ab8"/><rect x="9" y="13" width="1.3" height="1.3" fill="#8a9ab8"/></svg>
<div class="a" style="left:324px;top:725px;font-size:12px;font-weight:bold;color:#111;letter-spacing:.63px">Permission Changes</div>
<svg class="a" style="left:1148px;top:721px" width="16" height="16" viewBox="0 0 16 16"><rect x="0.5" y="0.5" width="15" height="15" rx="1.5" fill="#dc5a3a" stroke="#a9411f"/><rect x="2" y="2" width="12" height="12" fill="none" stroke="#f08a6a" stroke-width=".7"/><path d="M4.5 4.5 L11.5 11.5 M11.5 4.5 L4.5 11.5" stroke="#fff" stroke-width="2.2"/></svg>
<svg class="a" style="left:1000px;top:745px" width="15" height="17" viewBox="0 0 15 17"><path d="M1 1 H10 L14 5 V16 H1 Z" fill="#fff" stroke="#4a5a78" stroke-width="1"/><path d="M10 1 V5 H14" fill="none" stroke="#4a5a78"/><path d="M3.5 6.5 H5 M3.5 9.5 H5 M3.5 12.5 H5" stroke="#2a4a9a" stroke-width="1.4"/><path d="M6.5 6.5 H11.5 M6.5 9.5 H11.5 M6.5 12.5 H11.5" stroke="#4a5a78" stroke-width="1"/></svg>
<div class="a" style="left:1018px;top:751px;font-weight:bold;color:#111;letter-spacing:.4px">View SACL</div>
<div class="a" style="left:1082px;top:751px;color:#777">|</div>
<svg class="a" style="left:1089px;top:744px" width="15" height="17" viewBox="0 0 15 17"><path d="M1 1 H10 L14 5 V16 H1 Z" fill="#fff" stroke="#3a5a3a" stroke-width="1"/><path d="M10 1 V5 H14" fill="none" stroke="#3a5a3a"/><rect x="3.5" y="4.5" width="3" height="2.5" fill="#5cb83a" stroke="#2a7a1a" stroke-width=".6"/><rect x="5.5" y="8.5" width="3" height="2.5" fill="#5cb83a" stroke="#2a7a1a" stroke-width=".6"/><rect x="5.5" y="12" width="3" height="2.5" fill="#5cb83a" stroke="#2a7a1a" stroke-width=".6"/><path d="M4.5 7 V13 H5.5 M4.5 9.5 H5.5" stroke="#2a7a1a" stroke-width=".7" fill="none"/></svg>
<div class="a lnk" style="left:1104px;top:751px;letter-spacing:.3px">&nbsp;View DACL</div>
<div class="a" style="left:299px;top:768px;width:870px;height:26px;border-top:1px solid #e8e8e8;background:linear-gradient(#fdfdfd 0%,#f4f4f4 45%,#e0e0e0 100%)"></div>
<div class="a" style="left:303.0px;top:775px;font-weight:bold;color:#111;letter-spacing:0.4px">Type</div>
<div class="a" style="left:395px;top:768px;width:1px;height:26px;background:#fff"></div>
<div class="a" style="left:399.4px;top:775px;font-weight:bold;color:#111;letter-spacing:0.34px">Security Principal</div>
<div class="a" style="left:588px;top:768px;width:1px;height:26px;background:#fff"></div>
<div class="a" style="left:592.4px;top:775px;font-weight:bold;color:#111;letter-spacing:0.4px">Permission</div>
<div class="a" style="left:830px;top:768px;width:1px;height:26px;background:#fff"></div>
<div class="a" style="left:833.6px;top:775px;font-weight:bold;color:#111;letter-spacing:0.29px">Applies to</div>
<div class="a" style="left:1051px;top:768px;width:1px;height:26px;background:#fff"></div>
<div class="a" style="left:1055.4px;top:775px;font-weight:bold;color:#111;letter-spacing:0.78px">Is Inherited</div>
<div class="a" style="left:1149px;top:768px;width:1px;height:26px;background:#fff"></div>
<div class="a" style="left:299px;top:794.0px;width:855px;height:46.5px;border-bottom:1px solid #e3e3e3"></div>
<div class="a" style="left:396px;top:794px;width:1px;height:46.5px;background:#e6e6e6"></div>
<div class="a" style="left:590px;top:794px;width:1px;height:46.5px;background:#e6e6e6"></div>
<div class="a" style="left:832px;top:794px;width:1px;height:46.5px;background:#e6e6e6"></div>
<div class="a" style="left:1055px;top:794px;width:1px;height:46.5px;background:#e6e6e6"></div>
<div class="a" style="left:304px;top:810.8px;width:60px;height:14px"><svg width="12" height="12" viewBox="0 0 12 12" style="position:absolute;left:0;top:0"><circle cx="6" cy="6" r="5.8" fill="#34ad3c"/><path d="M3 6.2 L5.2 8.4 L9.2 3.8" stroke="#fff" stroke-width="1.9" fill="none"/></svg><span style="position:absolute;left:13.5px;top:3px;letter-spacing:.56px">Success</span></div>
<div class="a" style="left:399.6px;top:811.2px;letter-spacing:.81px">Everyone</div>
<div class="a" style="left:593px;top:797.8px;letter-spacing:.85px"><span style="display:inline-block;width:4px;height:4px;border-radius:2px;background:#222;vertical-align:middle;margin-right:7px;position:relative;top:-1px"></span>Write Property</div>
<div class="a" style="left:593px;top:810.8px;letter-spacing:.85px"><span style="display:inline-block;width:4px;height:4px;border-radius:2px;background:#222;vertical-align:middle;margin-right:7px;position:relative;top:-1px"></span>Modify Permissions</div>
<div class="a" style="left:593px;top:823.8px;letter-spacing:.85px"><span style="display:inline-block;width:4px;height:4px;border-radius:2px;background:#222;vertical-align:middle;margin-right:7px;position:relative;top:-1px"></span>Take Ownership</div>
<div class="a" style="left:836.4px;top:810.8px;letter-spacing:.78px">This object only</div>
<div class="a" style="left:1059px;top:810.8px;letter-spacing:.8px">false</div>
<div class="a" style="left:299px;top:840.5px;width:855px;height:32.8px;border-bottom:1px solid #e3e3e3"></div>
<div class="a" style="left:396px;top:840px;width:1px;height:32.8px;background:#e6e6e6"></div>
<div class="a" style="left:590px;top:840px;width:1px;height:32.8px;background:#e6e6e6"></div>
<div class="a" style="left:832px;top:840px;width:1px;height:32.8px;background:#e6e6e6"></div>
<div class="a" style="left:1055px;top:840px;width:1px;height:32.8px;background:#e6e6e6"></div>
<div class="a" style="left:304px;top:850.4px;width:60px;height:14px"><svg width="12" height="12" viewBox="0 0 12 12" style="position:absolute;left:0;top:0"><circle cx="6" cy="6" r="5.8" fill="#34ad3c"/><path d="M3 6.2 L5.2 8.4 L9.2 3.8" stroke="#fff" stroke-width="1.9" fill="none"/></svg><span style="position:absolute;left:13.5px;top:3px;letter-spacing:.56px">Success</span></div>
<div class="a" style="left:399.6px;top:850.9px;letter-spacing:.81px">Everyone</div>
<div class="a" style="left:593px;top:850.4px;letter-spacing:.85px"><span style="display:inline-block;width:4px;height:4px;border-radius:2px;background:#222;vertical-align:middle;margin-right:7px;position:relative;top:-1px"></span>Write Property - GP-Link</div>
<div class="a" style="left:836.4px;top:843.9px;letter-spacing:.78px;line-height:13px">Descendant Organizational-Unit<br>objects</div>
<div class="a" style="left:1059px;top:850.4px;letter-spacing:.8px">true</div>
<div class="a" style="left:299px;top:873.3px;width:855px;height:33.0px;border-bottom:1px solid #e3e3e3"></div>
<div class="a" style="left:396px;top:873px;width:1px;height:33.0px;background:#e6e6e6"></div>
<div class="a" style="left:590px;top:873px;width:1px;height:33.0px;background:#e6e6e6"></div>
<div class="a" style="left:832px;top:873px;width:1px;height:33.0px;background:#e6e6e6"></div>
<div class="a" style="left:1055px;top:873px;width:1px;height:33.0px;background:#e6e6e6"></div>
<div class="a" style="left:304px;top:883.3px;width:60px;height:14px"><svg width="12" height="12" viewBox="0 0 12 12" style="position:absolute;left:0;top:0"><circle cx="6" cy="6" r="5.8" fill="#34ad3c"/><path d="M3 6.2 L5.2 8.4 L9.2 3.8" stroke="#fff" stroke-width="1.9" fill="none"/></svg><span style="position:absolute;left:13.5px;top:3px;letter-spacing:.56px">Success</span></div>
<div class="a" style="left:399.6px;top:883.8px;letter-spacing:.81px">Everyone</div>
<div class="a" style="left:593px;top:883.3px;letter-spacing:.85px"><span style="display:inline-block;width:4px;height:4px;border-radius:2px;background:#222;vertical-align:middle;margin-right:7px;position:relative;top:-1px"></span>Write Property - GP-Opti...</div>
<div class="a" style="left:836.4px;top:876.8px;letter-spacing:.78px;line-height:13px">Descendant Organizational-Unit<br>objects</div>
<div class="a" style="left:1059px;top:883.3px;letter-spacing:.8px">true</div>
<div class="a" style="left:299px;top:906.3px;width:855px;height:32.9px;border-bottom:1px solid #e3e3e3"></div>
<div class="a" style="left:396px;top:906px;width:1px;height:32.9px;background:#e6e6e6"></div>
<div class="a" style="left:590px;top:906px;width:1px;height:32.9px;background:#e6e6e6"></div>
<div class="a" style="left:832px;top:906px;width:1px;height:32.9px;background:#e6e6e6"></div>
<div class="a" style="left:1055px;top:906px;width:1px;height:32.9px;background:#e6e6e6"></div>
<div class="a" style="left:304px;top:916.2px;width:60px;height:14px"><svg width="12" height="12" viewBox="0 0 12 12" style="position:absolute;left:0;top:0"><circle cx="6" cy="6" r="5.8" fill="#34ad3c"/><path d="M3 6.2 L5.2 8.4 L9.2 3.8" stroke="#fff" stroke-width="1.9" fill="none"/></svg><span style="position:absolute;left:13.5px;top:3px;letter-spacing:.56px">Success</span></div>
<div class="a" style="left:399.6px;top:916.8px;letter-spacing:.81px">Everyone</div>
<div class="a" style="left:593px;top:916.2px;letter-spacing:.85px"><span style="display:inline-block;width:4px;height:4px;border-radius:2px;background:#222;vertical-align:middle;margin-right:7px;position:relative;top:-1px"></span>Create Child - Computer</div>
<div class="a" style="left:836.4px;top:909.8px;letter-spacing:.78px;line-height:13px">This object and all descendant<br>objects</div>
<div class="a" style="left:1059px;top:916.2px;letter-spacing:.8px">true</div>
<div class="a" style="left:299px;top:939.2px;width:855px;height:32.8px;border-bottom:1px solid #e3e3e3"></div>
<div class="a" style="left:396px;top:939px;width:1px;height:32.8px;background:#e6e6e6"></div>
<div class="a" style="left:590px;top:939px;width:1px;height:32.8px;background:#e6e6e6"></div>
<div class="a" style="left:832px;top:939px;width:1px;height:32.8px;background:#e6e6e6"></div>
<div class="a" style="left:1055px;top:939px;width:1px;height:32.8px;background:#e6e6e6"></div>
<div class="a" style="left:304px;top:949.1px;width:60px;height:14px"><svg width="12" height="12" viewBox="0 0 12 12" style="position:absolute;left:0;top:0"><circle cx="6" cy="6" r="5.8" fill="#34ad3c"/><path d="M3 6.2 L5.2 8.4 L9.2 3.8" stroke="#fff" stroke-width="1.9" fill="none"/></svg><span style="position:absolute;left:13.5px;top:3px;letter-spacing:.56px">Success</span></div>
<div class="a" style="left:399.6px;top:949.6px;letter-spacing:.81px">Everyone</div>
<div class="a" style="left:593px;top:949.1px;letter-spacing:.85px"><span style="display:inline-block;width:4px;height:4px;border-radius:2px;background:#222;vertical-align:middle;margin-right:7px;position:relative;top:-1px"></span>Write Property</div>
<div class="a" style="left:836.4px;top:949.1px;letter-spacing:.78px">This object only</div>
<div class="a" style="left:1059px;top:949.1px;letter-spacing:.8px">true</div>
<div class="a" style="left:1154px;top:794px;width:15px;height:160px;background:#f0f0f0;border-left:1px solid #e4e4e4"></div>
<div class="a" style="left:1157px;top:796px;width:10px;height:30px;border:1px solid #bdbdbd;border-radius:2px;background:linear-gradient(90deg,#e6e6e6,#d2d2d2)"></div>
<!-- MAIN -->
</body></html>
